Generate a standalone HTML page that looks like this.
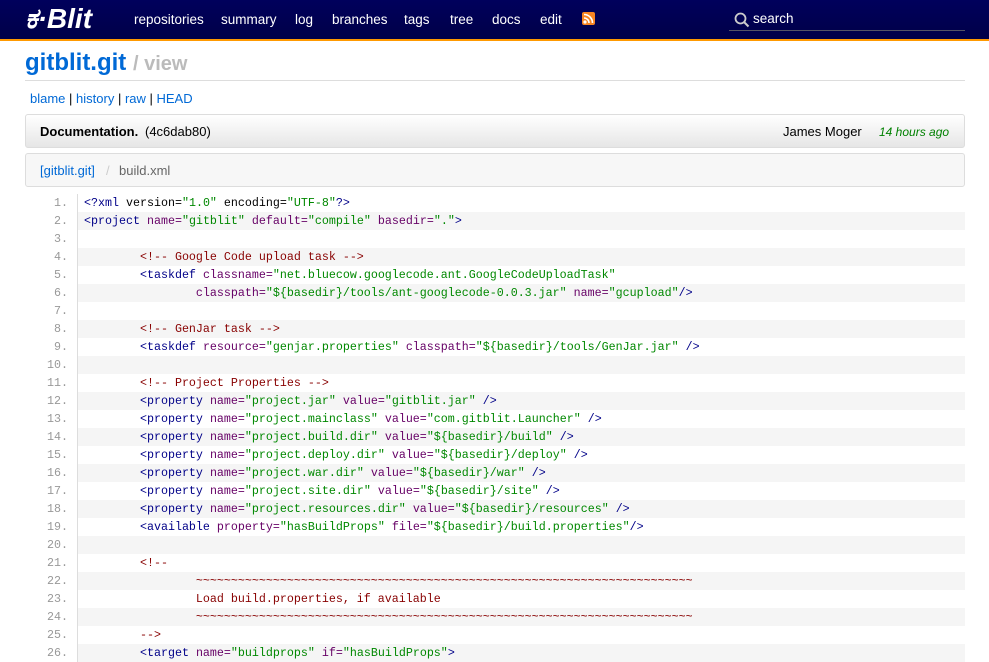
<!DOCTYPE html>
<html><head><meta charset="utf-8"><style>
body{margin:0;background:#fff;font-family:"Liberation Sans",Arial,sans-serif;font-size:13px;width:989px;height:652px;overflow:hidden}
.hdr{position:absolute;left:0;top:0;width:989px;height:39px;background:linear-gradient(#00005c,#000048);border-bottom:2px solid #ff9900}
.logo{position:absolute;left:25px;top:3px;color:#fff;font:italic bold 28px "Liberation Sans",sans-serif;letter-spacing:0}
.nav{position:absolute;top:12px;color:#fff;font-size:13.5px}
.nav span{position:absolute;white-space:nowrap}
.rss{position:absolute;left:582px;top:12px;width:13px;height:13px;background:#f78422;border-radius:2px;overflow:hidden}
.search{position:absolute;left:729px;top:9px;width:236px;height:21px;border-bottom:1px solid #556}
.search span{position:absolute;left:24px;top:2px;color:#fff;font-size:13.5px}
.title{position:absolute;left:25px;top:49px;font-size:24px;font-weight:bold;color:#0069d6}
.title i{font-style:normal;color:#bbb;font-size:20px}
.hr{position:absolute;left:25px;top:80px;width:940px;height:1px;background:#ddd}
.links{position:absolute;left:30px;top:91px;color:#0069d6;font-size:13px}
.links b{font-weight:normal;color:#000}
.bar{position:absolute;left:25px;width:938px;border:1px solid #ddd;border-radius:3px}
.b1{top:114px;height:32px;background:linear-gradient(#fff,#e6e6e6)}
.b2{top:153px;height:32px;background:#f7f7f7}
.code{position:absolute;left:25px;top:194px;width:940px;font-family:"Liberation Mono",monospace;font-size:11.66px}
.r{height:18px;line-height:18px;position:relative;white-space:pre}
.n{position:absolute;left:0;width:43px;text-align:right;color:#999}
.c{position:absolute;left:52px;width:888px;border-left:1px solid #ddd;padding-left:6px;box-sizing:border-box;height:18px}
.r:nth-child(even) .c{background:#f5f5f5}
.t{color:#000088}.a{color:#660066}.v{color:#008800}.m{color:#880000}
</style></head><body>
<div class="hdr">
<div class="logo">ಕ·Blit</div>
<div class="nav"><span style="left:134px">repositories</span><span style="left:221px">summary</span><span style="left:295px">log</span><span style="left:332px">branches</span><span style="left:404px">tags</span><span style="left:450px">tree</span><span style="left:492px">docs</span><span style="left:540px">edit</span></div>
<div class="rss"><svg width="13" height="13"><circle cx="3" cy="10" r="1.6" fill="#fff"/><path d="M2 6a5 5 0 0 1 5 5M2 2.5a8.5 8.5 0 0 1 8.5 8.5" stroke="#fff" stroke-width="1.6" fill="none"/></svg></div>
<div class="search"><svg width="16" height="16" style="position:absolute;left:5px;top:3px"><circle cx="6.5" cy="6.5" r="5" stroke="#ccc" stroke-width="1.8" fill="none"/><path d="M10 10l4.5 4.5" stroke="#ccc" stroke-width="2"/></svg><span>search</span></div>
</div>
<div class="title">gitblit.git <i>/ view</i></div>
<div class="hr"></div>
<div class="links">blame <b>|</b> history <b>|</b> raw <b>|</b> HEAD</div>
<div class="bar b1"><span style="position:absolute;left:14px;top:9px;font-weight:bold">Documentation.</span><span style="position:absolute;left:119px;top:9px">(4c6dab80)</span><span style="position:absolute;left:757px;top:9px">James Moger</span><span style="position:absolute;left:853px;top:10px;color:#008000;font-style:italic;font-size:12px">14 hours ago</span></div>
<div class="bar b2"><span style="position:absolute;left:14px;top:9px;color:#0069d6">[gitblit.git]</span><span style="position:absolute;left:80px;top:9px;color:#ccc">/</span><span style="position:absolute;left:93px;top:9px;color:#666">build.xml</span></div>
<div class="code">
<div class="r"><span class="n">1.</span><span class="c"><span class="t">&lt;?xml </span>version=<span class="v">"1.0"</span> encoding=<span class="v">"UTF-8"</span><span class="t">?&gt;</span></span></div>
<div class="r"><span class="n">2.</span><span class="c"><span class="t">&lt;project</span> <span class="a">name=</span><span class="v">"gitblit"</span> <span class="a">default=</span><span class="v">"compile"</span> <span class="a">basedir=</span><span class="v">"."</span><span class="t">&gt;</span></span></div>
<div class="r"><span class="n">3.</span><span class="c"> </span></div>
<div class="r"><span class="n">4.</span><span class="c">        <span class="m">&lt;!-- Google Code upload task --&gt;</span></span></div>
<div class="r"><span class="n">5.</span><span class="c">        <span class="t">&lt;taskdef</span> <span class="a">classname=</span><span class="v">"net.bluecow.googlecode.ant.GoogleCodeUploadTask"</span></span></div>
<div class="r"><span class="n">6.</span><span class="c">                <span class="a">classpath=</span><span class="v">"${basedir}/tools/ant-googlecode-0.0.3.jar"</span> <span class="a">name=</span><span class="v">"gcupload"</span><span class="t">/&gt;</span></span></div>
<div class="r"><span class="n">7.</span><span class="c"> </span></div>
<div class="r"><span class="n">8.</span><span class="c">        <span class="m">&lt;!-- GenJar task --&gt;</span></span></div>
<div class="r"><span class="n">9.</span><span class="c">        <span class="t">&lt;taskdef</span> <span class="a">resource=</span><span class="v">"genjar.properties"</span> <span class="a">classpath=</span><span class="v">"${basedir}/tools/GenJar.jar"</span> <span class="t">/&gt;</span></span></div>
<div class="r"><span class="n">10.</span><span class="c"> </span></div>
<div class="r"><span class="n">11.</span><span class="c">        <span class="m">&lt;!-- Project Properties --&gt;</span></span></div>
<div class="r"><span class="n">12.</span><span class="c">        <span class="t">&lt;property</span> <span class="a">name=</span><span class="v">"project.jar"</span> <span class="a">value=</span><span class="v">"gitblit.jar"</span> <span class="t">/&gt;</span></span></div>
<div class="r"><span class="n">13.</span><span class="c">        <span class="t">&lt;property</span> <span class="a">name=</span><span class="v">"project.mainclass"</span> <span class="a">value=</span><span class="v">"com.gitblit.Launcher"</span> <span class="t">/&gt;</span></span></div>
<div class="r"><span class="n">14.</span><span class="c">        <span class="t">&lt;property</span> <span class="a">name=</span><span class="v">"project.build.dir"</span> <span class="a">value=</span><span class="v">"${basedir}/build"</span> <span class="t">/&gt;</span></span></div>
<div class="r"><span class="n">15.</span><span class="c">        <span class="t">&lt;property</span> <span class="a">name=</span><span class="v">"project.deploy.dir"</span> <span class="a">value=</span><span class="v">"${basedir}/deploy"</span> <span class="t">/&gt;</span></span></div>
<div class="r"><span class="n">16.</span><span class="c">        <span class="t">&lt;property</span> <span class="a">name=</span><span class="v">"project.war.dir"</span> <span class="a">value=</span><span class="v">"${basedir}/war"</span> <span class="t">/&gt;</span></span></div>
<div class="r"><span class="n">17.</span><span class="c">        <span class="t">&lt;property</span> <span class="a">name=</span><span class="v">"project.site.dir"</span> <span class="a">value=</span><span class="v">"${basedir}/site"</span> <span class="t">/&gt;</span></span></div>
<div class="r"><span class="n">18.</span><span class="c">        <span class="t">&lt;property</span> <span class="a">name=</span><span class="v">"project.resources.dir"</span> <span class="a">value=</span><span class="v">"${basedir}/resources"</span> <span class="t">/&gt;</span></span></div>
<div class="r"><span class="n">19.</span><span class="c">        <span class="t">&lt;available</span> <span class="a">property=</span><span class="v">"hasBuildProps"</span> <span class="a">file=</span><span class="v">"${basedir}/build.properties"</span><span class="t">/&gt;</span></span></div>
<div class="r"><span class="n">20.</span><span class="c"> </span></div>
<div class="r"><span class="n">21.</span><span class="c">        <span class="m">&lt;!--</span></span></div>
<div class="r"><span class="n">22.</span><span class="c">                <span class="m">~~~~~~~~~~~~~~~~~~~~~~~~~~~~~~~~~~~~~~~~~~~~~~~~~~~~~~~~~~~~~~~~~~~~~~~</span></span></div>
<div class="r"><span class="n">23.</span><span class="c">                <span class="m">Load build.properties, if available</span></span></div>
<div class="r"><span class="n">24.</span><span class="c">                <span class="m">~~~~~~~~~~~~~~~~~~~~~~~~~~~~~~~~~~~~~~~~~~~~~~~~~~~~~~~~~~~~~~~~~~~~~~~</span></span></div>
<div class="r"><span class="n">25.</span><span class="c">        <span class="m">--&gt;</span></span></div>
<div class="r"><span class="n">26.</span><span class="c">        <span class="t">&lt;target</span> <span class="a">name=</span><span class="v">"buildprops"</span> <span class="a">if=</span><span class="v">"hasBuildProps"</span><span class="t">&gt;</span></span></div>
</div>
</body></html>
